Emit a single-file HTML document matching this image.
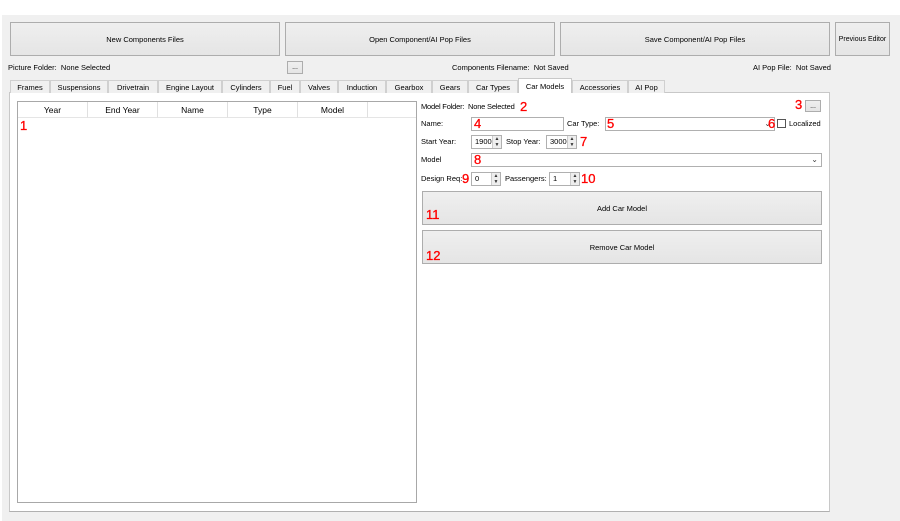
<!DOCTYPE html>
<html><head><meta charset="utf-8"><style>
*{box-sizing:border-box;margin:0;padding:0}
body{width:900px;height:521px;background:#fff;position:relative;overflow:hidden;font-family:"Liberation Sans",sans-serif;font-size:7.5px;color:#000;white-space:nowrap}
.a{position:absolute}
.bg{left:2px;top:15px;width:898px;height:506px;background:#f0f0f0}
.btn{position:absolute;background:linear-gradient(#efefef,#e5e5e5);border:1px solid #adadad;display:flex;align-items:center;justify-content:center;font-size:7.5px}
.tab{position:absolute;top:80px;height:13px;border:1px solid #d0d0d0;border-bottom:none;background:#f0f0f0;font-size:7.5px;display:flex;align-items:center;justify-content:center}
.tab.sel{top:78px;height:15px;background:#fff;border-color:#c8c8c8;z-index:2}
.panel{left:9px;top:92px;width:821px;height:420px;background:#fff;border:1px solid #c8c8c8;border-bottom-color:#b0b0b0}
.tbl{left:17px;top:101px;width:400px;height:402px;border:1px solid #a8a8a8;background:#fff}
.hd{position:absolute;top:0;height:16px;border-right:1px solid #e0e0e0;border-bottom:1px solid #e5e5e5;display:flex;align-items:center;justify-content:center;font-size:8.5px}
.lbl{position:absolute;font-size:7.5px;line-height:10px}
.in{position:absolute;background:#fff;border:1px solid #b0b0b0;height:14px;font-size:7.5px;padding-left:3px;line-height:12px}
.sp{position:absolute;right:0;top:0;width:9px;height:12px;border-left:1px solid #ccc;background:#eee;font-size:5px;line-height:6px;text-align:center;color:#333}
.r{position:absolute;color:#f00;font-size:13px;line-height:12px;font-family:"Liberation Sans",sans-serif;-webkit-text-stroke:0.3px #f00}
.cb{position:absolute;right:3px;top:0;font-size:8px;color:#444}
</style></head><body>
<div class="a bg"></div>
<div class="btn" style="left:10px;top:22px;width:270px;height:34px">New Components Files</div>
<div class="btn" style="left:285px;top:22px;width:270px;height:34px">Open Component/AI Pop Files</div>
<div class="btn" style="left:560px;top:22px;width:270px;height:34px">Save Component/AI Pop Files</div>
<div class="btn" style="left:835px;top:22px;width:55px;height:34px;font-size:7px">Previous Editor</div>
<div class="lbl" style="left:8px;top:63px">Picture Folder:&nbsp; None Selected</div>
<div class="btn" style="left:287px;top:61px;width:16px;height:13px;font-size:7px">...</div>
<div class="lbl" style="left:452px;top:63px">Components Filename:&nbsp; Not Saved</div>
<div class="lbl" style="left:753px;top:63px">AI Pop File:&nbsp; Not Saved</div>

<div class="a panel"></div>
<div class="tab" style="left:10px;width:40px">Frames</div>
<div class="tab" style="left:50px;width:58px">Suspensions</div>
<div class="tab" style="left:108px;width:50px">Drivetrain</div>
<div class="tab" style="left:158px;width:64px">Engine Layout</div>
<div class="tab" style="left:222px;width:48px">Cylinders</div>
<div class="tab" style="left:270px;width:30px">Fuel</div>
<div class="tab" style="left:300px;width:38px">Valves</div>
<div class="tab" style="left:338px;width:48px">Induction</div>
<div class="tab" style="left:386px;width:46px">Gearbox</div>
<div class="tab" style="left:432px;width:36px">Gears</div>
<div class="tab" style="left:468px;width:50px">Car Types</div>
<div class="tab sel" style="left:518px;width:54px">Car Models</div>
<div class="tab" style="left:572px;width:56px">Accessories</div>
<div class="tab" style="left:628px;width:37px">AI Pop</div>

<div class="a tbl">
<div class="hd" style="left:0;width:70px">Year</div>
<div class="hd" style="left:70px;width:70px">End Year</div>
<div class="hd" style="left:140px;width:70px">Name</div>
<div class="hd" style="left:210px;width:70px">Type</div>
<div class="hd" style="left:280px;width:70px">Model</div>
<div class="hd" style="left:350px;width:48px;border-right:none"></div>
</div>
<div class="r" style="left:20px;top:120px">1</div>

<div class="lbl" style="left:421px;top:102px;letter-spacing:-0.2px">Model Folder:&nbsp; None Selected</div>
<div class="r" style="left:520px;top:101px">2</div>
<div class="r" style="left:795px;top:99px">3</div>
<div class="btn" style="left:805px;top:100px;width:16px;height:12px;font-size:7px">...</div>

<div class="lbl" style="left:421px;top:119px">Name:</div>
<div class="in" style="left:471px;top:117px;width:93px"></div>
<div class="r" style="left:474px;top:118px">4</div>
<div class="lbl" style="left:567px;top:119px">Car Type:</div>
<div class="in" style="left:605px;top:117px;width:170px"><span class="cb">&#8964;</span></div>
<div class="r" style="left:607px;top:118px">5</div>
<div class="r" style="left:768px;top:118px">6</div>
<div class="a" style="left:777px;top:119px;width:9px;height:9px;border:1px solid #555;background:#fff"></div>
<div class="lbl" style="left:789px;top:119px">Localized</div>

<div class="lbl" style="left:421px;top:137px">Start Year:</div>
<div class="in" style="left:471px;top:135px;width:31px">1900<div class="sp">▲<br>▼</div></div>
<div class="lbl" style="left:506px;top:137px">Stop Year:</div>
<div class="in" style="left:546px;top:135px;width:31px">3000<div class="sp">▲<br>▼</div></div>
<div class="r" style="left:580px;top:136px">7</div>

<div class="lbl" style="left:421px;top:155px">Model</div>
<div class="in" style="left:471px;top:153px;width:351px"><span class="cb">&#8964;</span></div>
<div class="r" style="left:474px;top:154px">8</div>

<div class="lbl" style="left:421px;top:174px">Design Req:</div>
<div class="r" style="left:462px;top:173px">9</div>
<div class="in" style="left:471px;top:172px;width:30px">0<div class="sp">▲<br>▼</div></div>
<div class="lbl" style="left:505px;top:174px">Passengers:</div>
<div class="in" style="left:549px;top:172px;width:31px">1<div class="sp">▲<br>▼</div></div>
<div class="r" style="left:581px;top:173px">10</div>

<div class="btn" style="left:422px;top:191px;width:400px;height:34px">Add Car Model</div>
<div class="r" style="left:426px;top:209px">11</div>
<div class="btn" style="left:422px;top:230px;width:400px;height:34px">Remove Car Model</div>
<div class="r" style="left:426px;top:250px">12</div>
</body></html>
